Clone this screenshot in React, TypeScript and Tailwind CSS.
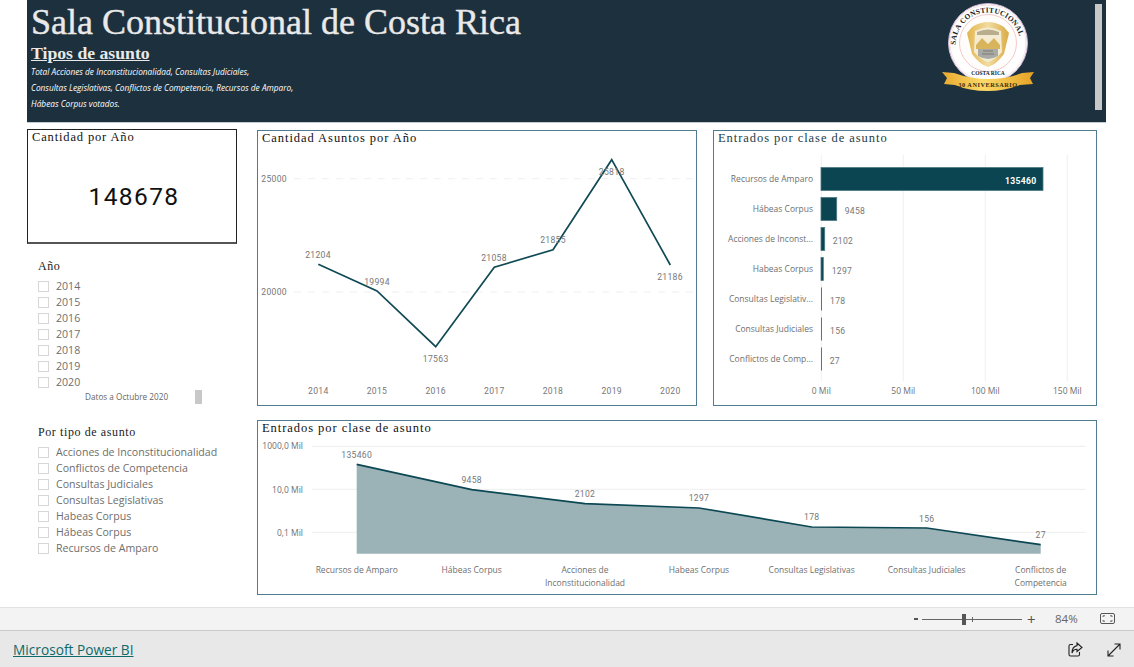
const SERIF = "font-['Liberation_Serif',serif]";
const UI = "font-['Open_Sans',sans-serif]";

const YEARS = ["2014", "2015", "2016", "2017", "2018", "2019", "2020"];
const TIPOS = [
  "Acciones de Inconstitucionalidad",
  "Conflictos de Competencia",
  "Consultas Judiciales",
  "Consultas Legislativas",
  "Habeas Corpus",
  "Hábeas Corpus",
  "Recursos de Amparo",
];

const LINE_POINTS = [
  { year: "2014", x: 318.3, y: 264.3, value: "21204", labelX: 318, labelY: 255 },
  { year: "2015", x: 377, y: 291, value: "19994", labelX: 377, labelY: 282 },
  { year: "2016", x: 435.7, y: 346.7, value: "17563", labelX: 435.7, labelY: 359 },
  { year: "2017", x: 494.3, y: 267.3, value: "21058", labelX: 494, labelY: 258 },
  { year: "2018", x: 553, y: 249.7, value: "21855", labelX: 553, labelY: 240 },
  { year: "2019", x: 611.7, y: 159.7, value: "25818", labelX: 611.7, labelY: 172 },
  { year: "2020", x: 670.3, y: 265, value: "21186", labelX: 670, labelY: 277 },
];

const BARS = [
  { name: "Recursos de Amparo", width: 222, value: "135460", valueX: 1005 },
  { name: "Hábeas Corpus", width: 15.7, value: "9458", valueX: 844.7 },
  { name: "Acciones de Inconst...", width: 3.7, value: "2102", valueX: 832.7 },
  { name: "Habeas Corpus", width: 2.3, value: "1297", valueX: 831.7 },
  { name: "Consultas Legislativ...", width: 0.7, value: "178", valueX: 830 },
  { name: "Consultas Judiciales", width: 0.7, value: "156", valueX: 830 },
  { name: "Conflictos de Comp...", width: 0.7, value: "27", valueX: 829.7 },
];

const AREA_POINTS = [
  { x: 356.7, y: 464.3, value: "135460", labelY: 455, cat: ["Recursos de Amparo"] },
  { x: 471.7, y: 489.7, value: "9458", labelY: 480, cat: ["Hábeas Corpus"] },
  { x: 585, y: 503.7, value: "2102", labelY: 494, cat: ["Acciones de", "Inconstitucionalidad"] },
  { x: 699, y: 508, value: "1297", labelY: 498, cat: ["Habeas Corpus"] },
  { x: 811.7, y: 527, value: "178", labelY: 516.7, cat: ["Consultas Legislativas"] },
  { x: 926.7, y: 528, value: "156", labelY: 519, cat: ["Consultas Judiciales"] },
  { x: 1040.7, y: 544.7, value: "27", labelY: 535, cat: ["Conflictos de", "Competencia"] },
];

function Logo() {
  return (
    <svg width="100" height="92" viewBox="0 0 100 92" className="mr-[65px] mt-[2px] shrink-0">
      <defs>
        <linearGradient id="gold" x1="0" x2="1" y1="0" y2="0">
          <stop offset="0" stopColor="#e8a92f" />
          <stop offset="0.45" stopColor="#fbd968" />
          <stop offset="1" stopColor="#e5a224" />
        </linearGradient>
        <linearGradient id="shield" x1="0" x2="1" y1="0" y2="0">
          <stop offset="0" stopColor="#e3b64f" />
          <stop offset="0.5" stopColor="#f1dc9f" />
          <stop offset="1" stopColor="#d9ab45" />
        </linearGradient>
        <path id="ringText" d="M 14.5 43 A 32.5 32.5 0 1 1 79.5 43" fill="none" />
      </defs>
      <circle cx="47" cy="41" r="39.5" fill="#ffffff" stroke="#c9b8d8" strokeWidth="1" />
      <circle cx="47" cy="41" r="28.5" fill="#fffdfb" stroke="#eeb3b3" strokeWidth="0.7" />
      <circle cx="47" cy="41" r="38" fill="none" stroke="#f2c4c4" strokeWidth="0.5" />
      <text fontSize="7.4" fill="#222" fontFamily="'Liberation Serif', serif" fontWeight="700" letterSpacing="0.2">
        <textPath href="#ringText" startOffset="0">
          SALA CONSTITUCIONAL
        </textPath>
      </text>
      <path d="M 31 25 Q 47 15 63 25 L 68 31 L 63 52 Q 55 63 47 65 Q 39 63 31 52 L 26 31 Z" fill="url(#shield)" />
      <path d="M 34 29 Q 47 22 60 29 L 61 50 Q 54 58 47 60 Q 40 58 33 50 Z" fill="#f4ecd2" />
      <path d="M 36 30 Q 47 25 58 30 L 58 33 H 36 Z" fill="#b8ad8c" />
      <path d="M 35 43 L 41 36 L 47 42 L 53 36 L 59 43 L 59 47 L 35 47 Z" fill="#d8b55c" />
      <path d="M 37 47 H 57 V 54 Q 47 60 37 54 Z" fill="#a9aaa6" />
      <path d="M 42 49 H 52 M 41 52 H 53" stroke="#6e6e68" strokeWidth="0.8" />
      <text x="47" y="73" textAnchor="middle" fontSize="5.5" fontWeight="700" fill="#222" fontFamily="'Liberation Serif', serif">
        COSTA RICA
      </text>
      <path d="M 1 70 L 13 71 Q 30 77 47 77 Q 66 77 81 71 L 93 70 L 89 76 L 92 82 L 79 83 Q 63 89 47 89 Q 28 89 14 83 L 3 82 L 6 76 Z" fill="url(#gold)" />
      <text x="47" y="85" textAnchor="middle" fontSize="6.3" fontWeight="700" letterSpacing="0.5" fill="#3a2b10" fontFamily="'Liberation Serif', serif">
        30 ANIVERSARIO
      </text>
    </svg>
  );
}

function Header() {
  return (
    <header className="relative flex h-[123px] w-[1079px] items-start justify-between border-b border-[#c5cbcf] bg-[#1d303d] pl-[4px] shrink-0">
      <div>
        <h1 className={`${SERIF} mt-[1px] text-[36px] leading-[43px] text-[#e9e9e9] [-webkit-text-stroke:0.4px_#e9e9e9]`}>
          Sala Constitucional de Costa Rica
        </h1>
        <h2 className={`${SERIF} text-[17.7px] leading-[19px] font-bold text-[#e9e9e9] underline`}>Tipos de asunto</h2>
        <div className={`${UI} mt-[1px] text-[8.3px] leading-[16px] italic text-white`}>
          <p>Total Acciones de Inconstitucionalidad, Consultas Judiciales,</p>
          <p>Consultas Legislativas, Conflictos de Competencia, Recursos de Amparo,</p>
          <p>Hábeas Corpus votados.</p>
        </div>
      </div>
      <Logo />
      <div className="absolute right-[4px] top-[4px] h-[106px] w-[7px] bg-[#c8c8c8]" />
    </header>
  );
}

function CheckRow({ label }: { label: string }) {
  return (
    <div className="flex h-[16px] items-center gap-[7px]">
      <span className="h-[11px] w-[11px] border border-[#d8d6d8] bg-white shrink-0" />
      <span className={`${UI} text-[10.6px] leading-[16px] text-[#6e6e6e] whitespace-nowrap`}>{label}</span>
    </div>
  );
}

function Sidebar() {
  return (
    <aside className="flex w-[210px] flex-col shrink-0">
      <div className="flex h-[115px] flex-col border border-b-2 border-[#222] border-b-[#555] pl-[4px]">
        <h3 className={`${SERIF} text-[12.5px] leading-[14px] tracking-[0.85px] text-[#111]`}>Cantidad por Año</h3>
        <div className="flex flex-1 items-center justify-center pt-[9px] font-['Roboto',sans-serif] text-[24.5px] tracking-[1.4px] text-[#111]">
          148678
        </div>
      </div>
      <div className="mt-[14px] pl-[11px]">
        <h4 className={`${SERIF} mb-[4px] text-[12px] leading-[16px] tracking-[0.6px] text-[#222]`}>Año</h4>
        {YEARS.map((y) => (
          <CheckRow key={y} label={y} />
        ))}
      </div>
      <div className="flex h-[14px] items-center pl-[58px]">
        <span className={`${UI} w-[110px] text-[8.2px] text-[#666] whitespace-nowrap`}>Datos a Octubre 2020</span>
        <span className="h-[14px] w-[7px] bg-[#c8c8c8]" />
      </div>
      <div className="mt-[20px] pl-[11px]">
        <h4 className={`${SERIF} mb-[4px] text-[12px] leading-[16px] tracking-[0.6px] text-[#222]`}>Por tipo de asunto</h4>
        {TIPOS.map((t) => (
          <CheckRow key={t} label={t} />
        ))}
      </div>
    </aside>
  );
}

function Panel({ title, className, titleColor = "text-[#111]", children }: { title: string; className: string; titleColor?: string; children: React.ReactNode }) {
  return (
    <section className={`flex flex-col border border-[#4f7c90] bg-white shrink-0 ${className}`}>
      <h3 className={`${SERIF} h-[15px] pl-[4px] text-[12.5px] leading-[14px] tracking-[0.95px] shrink-0 ${titleColor}`}>{title}</h3>
      {children}
    </section>
  );
}

function LineChart() {
  return (
    <svg width="438" height="259" viewBox="258 146 438 259" className="block">
      <g stroke="#efefef" strokeDasharray="7 7">
        <line x1="294" x2="695" y1="178.7" y2="178.7" />
        <line x1="294" x2="695" y1="292" y2="292" />
      </g>
      <g fontFamily="Roboto, sans-serif" fontSize="8.6" fill="#777" letterSpacing="0.3">
        <text x="287" y="182" textAnchor="end">25000</text>
        <text x="287" y="295" textAnchor="end">20000</text>
        {LINE_POINTS.map((p) => (
          <text key={p.year} x={p.x} y="394" textAnchor="middle">{p.year}</text>
        ))}
      </g>
      <polyline points={LINE_POINTS.map((p) => `${p.x},${p.y}`).join(" ")} fill="none" stroke="#0f4a55" strokeWidth="1.7" />
      <g fontFamily="Roboto, sans-serif" fontSize="8.6" fill="#777" letterSpacing="0.3" textAnchor="middle">
        {LINE_POINTS.map((p) => (
          <text key={p.value} x={p.labelX} y={p.labelY + 3}>{p.value}</text>
        ))}
      </g>
    </svg>
  );
}

function BarChart() {
  return (
    <svg width="382" height="259" viewBox="714 146 382 259" className="block">
      <g stroke="#f0f0f0" strokeWidth="1">
        {[821.3, 903.3, 985.3, 1067.3].map((x) => (
          <line key={x} x1={x} x2={x} y1="155" y2="381" />
        ))}
      </g>
      {BARS.map((b, i) => {
        const y = 167.5 + i * 30;
        return (
          <g key={b.name + i}>
            <rect x="821" y={y} width={b.width} height="23" fill="#0a4551" stroke={b.width > 1 ? "#4d7a85" : "none"} strokeWidth="0.8" />
            <text x="813" y={y + 14} textAnchor="end" fontFamily="'Open Sans', sans-serif" fontSize="8.5" fill="#6f6f6f">{b.name}</text>
            <text
              x={b.valueX}
              y={y + 16}
              fontFamily="Roboto, sans-serif"
              fontSize="8.6"
              letterSpacing="0.3"
              fontWeight={i === 0 ? 700 : 400}
              fill={i === 0 ? "#ffffff" : "#777"}
            >
              {b.value}
            </text>
          </g>
        );
      })}
      <g fontFamily="'Open Sans', sans-serif" fontSize="8.5" fill="#6f6f6f" textAnchor="middle">
        <text x="821.3" y="394">0 Mil</text>
        <text x="903.3" y="394">50 Mil</text>
        <text x="985.3" y="394">100 Mil</text>
        <text x="1067.3" y="394">150 Mil</text>
      </g>
    </svg>
  );
}

function AreaChart() {
  const line = AREA_POINTS.map((p) => `${p.x},${p.y}`).join(" ");
  return (
    <svg width="838" height="158" viewBox="258 436 838 158" className="block">
      <g stroke="#eeeeee">
        {[446.3, 489.3, 532.3].map((y) => (
          <line key={y} x1="311.7" x2="1086" y1={y} y2={y} />
        ))}
      </g>
      <g fontFamily="'Open Sans', sans-serif" fontSize="8.5" fill="#6f6f6f" textAnchor="end">
        <text x="303" y="449">1000,0 Mil</text>
        <text x="303" y="492.5">10,0 Mil</text>
        <text x="303" y="535.5">0,1 Mil</text>
      </g>
      <polygon points={`356.7,553.7 ${line} 1040.7,553.7`} fill="#9bb3b7" />
      <polyline points={line} fill="none" stroke="#0c4853" strokeWidth="1.7" />
      {AREA_POINTS.map((p) => (
        <g key={p.value} textAnchor="middle">
          <text x={p.x} y={p.labelY + 3} fontFamily="Roboto, sans-serif" fontSize="8.6" letterSpacing="0.3" fill="#777">{p.value}</text>
          {p.cat.map((c, i) => (
            <text key={c} x={p.x} y={572.7 + i * 13} fontFamily="'Open Sans', sans-serif" fontSize="8.5" fill="#6f6f6f">{c}</text>
          ))}
        </g>
      ))}
    </svg>
  );
}

function ZoomBar() {
  return (
    <div className="flex h-[24px] items-center border-y border-b-[#c8c8c8] border-t-[#e2e2e2] bg-[#f3f3f3] shrink-0">
      <div className="ml-auto flex items-center">
        <span className="h-[2px] w-[4px] bg-[#555]" />
        <div className="relative ml-[4px] h-[1px] w-[100px] bg-[#666]">
          <span className="absolute left-[40px] top-[-5px] h-[11px] w-[4px] bg-[#555]" />
          <span className="absolute left-[50px] top-[-2px] h-[5px] w-[1px] bg-[#666]" />
        </div>
        <span className="ml-[5px] w-[10px] font-['Open_Sans',sans-serif] text-[15px] leading-none text-[#555]">+</span>
        <span className={`${UI} ml-[18px] w-[24px] text-[11.5px] text-[#666]`}>84%</span>
        <svg width="15" height="12" viewBox="0 0 15 12" className="ml-[21px] mr-[19px]" fill="none" stroke="#555">
          <rect x="0.5" y="0.5" width="14" height="10" rx="1.5" />
          <path d="M3 4V2.8H5M12 4V2.8H10M3 7V8.2H5M12 7V8.2H10" strokeWidth="0.9" />
        </svg>
      </div>
    </div>
  );
}

function Footer() {
  return (
    <footer className="flex flex-1 items-center bg-[#e8e8e8] pl-[13px] pt-[3px]">
      <a href="#" className={`${UI} text-[13.7px] text-[#0f6a6a] underline`}>Microsoft Power BI</a>
      <div className="ml-auto flex items-center gap-[24px] pr-[13px] pb-[2px]">
        <svg width="15" height="15" viewBox="0 0 15 15" fill="none" stroke="#222" strokeWidth="1.1">
          <path d="M5 2.5H2.5Q1 2.5 1 4V12.5Q1 14 2.5 14H10Q11.5 14 11.5 12.5V10" />
          <path d="M9 1L14 5.5L9 9.5V7.2Q5.5 7 4 11Q4 4.6 9 3.6Z" />
        </svg>
        <svg width="14" height="14" viewBox="0 0 14 14" fill="none" stroke="#222" strokeWidth="1.1">
          <path d="M1 13L13 1M7.5 1H13V6.5M1 7.5V13H6.5" />
        </svg>
      </div>
    </footer>
  );
}

export default function App() {
  return (
    <div className="flex h-[667px] w-[1134px] flex-col overflow-hidden bg-white">
      <main className="flex h-[607px] flex-col pl-[27px] shrink-0">
        <Header />
        <div className="mt-[6px] flex">
          <Sidebar />
          <div className="ml-[20px] flex flex-col">
            <div className="mt-[1px] flex gap-[16px]">
              <Panel title="Cantidad Asuntos por Año" className="h-[276px] w-[440px]">
                <LineChart />
              </Panel>
              <Panel title="Entrados por clase de asunto" titleColor="text-[#1d3d46]" className="h-[276px] w-[384px]">
                <BarChart />
              </Panel>
            </div>
            <Panel title="Entrados por clase de asunto" className="mt-[14px] h-[175px] w-[840px]">
              <AreaChart />
            </Panel>
          </div>
        </div>
      </main>
      <ZoomBar />
      <Footer />
    </div>
  );
}
